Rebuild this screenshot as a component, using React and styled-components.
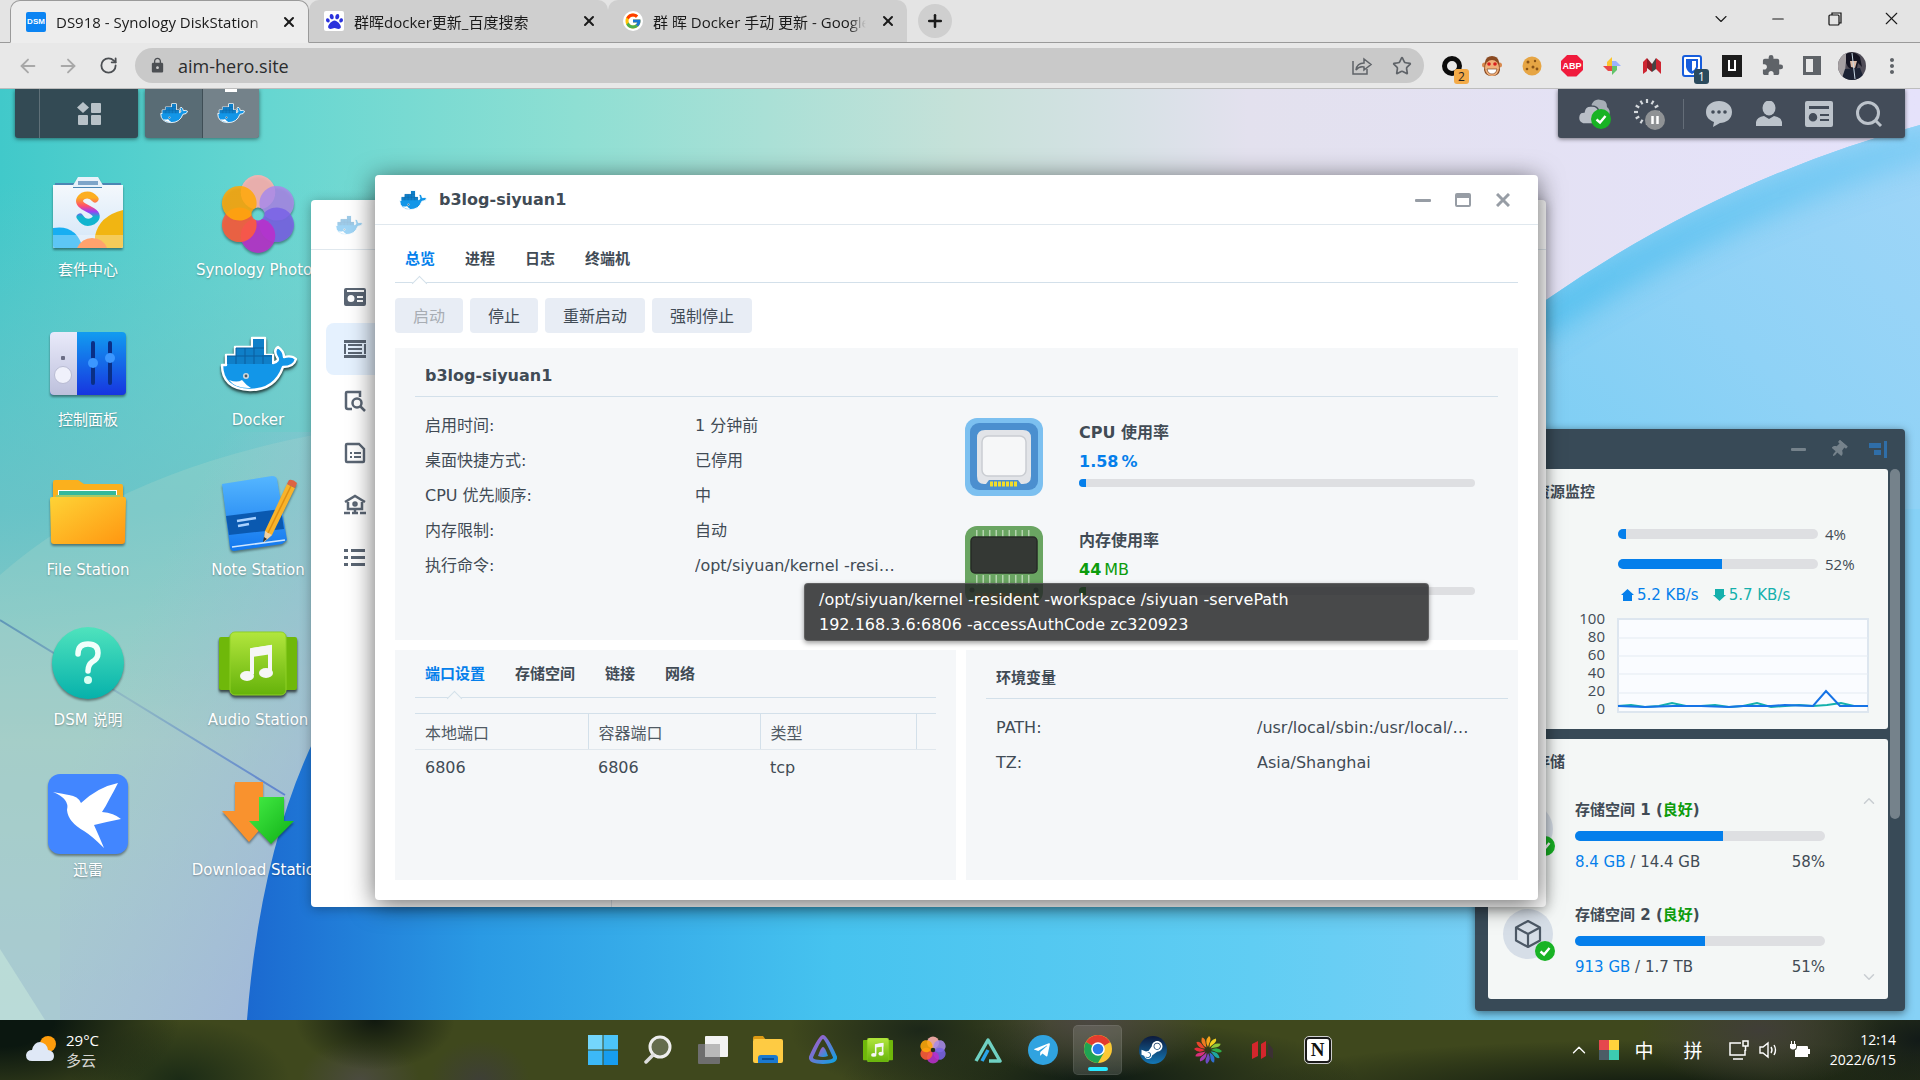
import React from 'react';
import styled, { createGlobalStyle, css } from 'styled-components';
import { FcGoogle } from 'react-icons/fc';
import { FaPaw, FaThumbtack, FaTelegramPlane, FaSteamSymbol } from 'react-icons/fa';
import { MdExtension, MdLock, MdMoreVert } from 'react-icons/md';
import { ArrowLeft, ArrowRight, ChevronDown, ChevronUp, Minus, Plus, RotateCw, Star, X } from 'lucide-react';

const ui = '"Open Sans", "Noto Sans CJK SC", sans-serif';
const dsm = '"DejaVu Sans", "Noto Sans CJK SC", sans-serif';
const ink = '#414b55';
const blue = '#057feb';
const green = '#0c9c0c';
const line = '#d3e0ea';

const Global = createGlobalStyle`
  *, *::before, *::after { box-sizing: border-box; }
  body { margin: 0; background: #333; overflow: hidden; }
  button, input { font: inherit; color: inherit; border: 0; background: none; padding: 0; margin: 0; }
  svg { display: block; flex: none; }
  dl, dd, h1, h2, h3, p, ul { margin: 0; padding: 0; }
`;

const Screen = styled.div`
  display: flex;
  flex-direction: column;
  height: 100vh;
  font-family: ${ui};
`;

/* ---------- browser ---------- */

const TabStrip = styled.header`
  display: flex;
  height: 43px;
  padding-left: 10px;
  background: #e4e4e4;
  border-bottom: 1px solid #9a9a9a;
  color: #1b1b1b;
`;
const BrowserTab = styled.div`
  display: flex;
  align-items: center;
  width: 299px;
  height: 43px;
  padding: 0 9px 0 15px;
  font-size: 15px;
  border-radius: 10px 10px 0 0;
  background: #cfcfcf;
  border-bottom: 1px solid #9a9a9a;
  ${(p) => p.$active && css`
    background: #ededed;
    border: 1px solid #9a9a9a;
    border-bottom-color: #ededed;
  `}
`;
const TabTitle = styled.span`
  flex: 1;
  margin: 0 12px 0 10px;
  overflow: hidden;
  white-space: nowrap;
  mask-image: linear-gradient(90deg, #000 92%, transparent);
`;
const TabClose = styled.button`
  display: grid;
  place-items: center;
  width: 20px;
  height: 20px;
`;
const DsmIcon = styled.span`
  display: grid;
  place-items: center;
  width: 20px;
  height: 20px;
  border-radius: 2px;
  background: #0b84f3;
  color: #fff;
  font: bold 8px/10px "Liberation Sans", sans-serif;
`;
const Favicon = styled.span`
  display: grid;
  place-items: center;
  width: 20px;
  height: 20px;
  border-radius: ${(p) => p.$round || '2px'};
  background: #fff;
  color: #2a32dc;
`;
const NewTab = styled.button`
  display: grid;
  place-items: center;
  width: 34px;
  height: 34px;
  margin: 4px 0 0 11px;
  border-radius: 50%;
  background: #cfcfcf;
`;
const WindowButtons = styled.div`
  display: flex;
  margin-left: auto;
`;
const WindowButton = styled.button`
  display: grid;
  place-items: center;
  width: 57px;
  height: 37px;
`;
const Toolbar = styled.nav`
  display: flex;
  align-items: center;
  height: 46px;
  padding: 0 8px;
  background: #e8e8e8;
  border-bottom: 1px solid #bdbdbd;
  color: #5f6368;
`;
const NavButton = styled.button`
  display: grid;
  place-items: center;
  width: 40px;
  height: 40px;
  color: ${(p) => (p.disabled ? '#a8a8a8' : '#4c4f53')};
`;
const Omnibox = styled.label`
  display: flex;
  flex: 1;
  align-items: center;
  height: 35px;
  margin: 0 8px 0 7px;
  padding: 0 2px 0 14px;
  border-radius: 18px;
  background: #c9c9c9;
  input { flex: 1; height: 34px; margin-left: 12px; font-size: 18px; color: #2a2c2e; outline: 0; }
`;
const ExtBadge = styled.span`
  position: absolute;
  right: 3px;
  bottom: 2px;
  width: 15px;
  border-radius: 3px;
  font-size: 12px;
  line-height: 15px;
  text-align: center;
  background: ${(p) => p.$bg};
  color: ${(p) => p.$fg};
`;
const ExtButton = styled.button`
  position: relative;
  display: grid;
  place-items: center;
  width: 40px;
  height: 40px;
`;
const AbpMark = styled.span`
  display: grid;
  place-items: center;
  width: 22px;
  height: 22px;
  background: #f01b3c;
  clip-path: polygon(30% 0, 70% 0, 100% 30%, 100% 70%, 70% 100%, 30% 100%, 0 70%, 0 30%);
  color: #fff;
  font: bold 9px/10px "Liberation Sans", sans-serif;
`;

/* ---------- desktop ---------- */

const Desktop = styled.main`
  position: relative;
  flex: 1;
  min-height: 0;
  overflow: hidden;
  font-family: ${dsm};
  color: ${ink};
`;
const Wallpaper = styled.svg`
  position: absolute;
  inset: 0;
  width: 100%;
  height: 100%;
`;
const DsmBar = styled.div`
  position: relative;
  display: flex;
  gap: 7px;
  height: 49px;
  padding: 0 15px;
`;
const BarGroup = styled.div`
  display: flex;
  background: ${(p) => p.$bg || '#334a54'};
  border-radius: 0 0 3px 3px;
  box-shadow: 0 1px 4px rgba(0, 0, 0, .5);
  overflow: hidden;
`;
const BarStub = styled.span`
  width: 25px;
  border-right: 1px solid #5f7078;
`;
const BarButton = styled.button`
  position: relative;
  display: grid;
  place-items: center;
  width: ${(p) => p.$w || 57}px;
  ${(p) => p.$lit && css`
    background: #74828a;
    border-left: 1px solid #3f4e56;
    &::before {
      content: '';
      position: absolute;
      top: 0;
      left: calc(50% - 6px);
      width: 12px;
      height: 3px;
      background: #fff;
    }
  `}
`;
const Tray = styled.div`
  display: flex;
  align-items: center;
  width: 347px;
  margin-left: auto;
  padding: 0 11px;
  background: #434c59;
  border-radius: 0 0 3px 3px;
  box-shadow: 0 1px 4px rgba(0, 0, 0, .5);
`;
const TraySplit = styled.span`
  width: 1px;
  height: 30px;
  margin: 0 10px 0 4px;
  background: #646d78;
`;
const Shortcuts = styled.div`
  position: relative;
  display: grid;
  grid-template-columns: repeat(2, 170px);
  grid-template-rows: repeat(5, 150px);
  grid-auto-flow: column;
  margin: 36px 0 0 3px;
`;
const Shortcut = styled.button`
  display: flex;
  flex-direction: column;
  align-items: center;
  gap: 5px;
  color: #fff;
  font-size: 15px;
  line-height: 22px;
  white-space: nowrap;
  text-shadow: 0 1px 2px rgba(0, 0, 0, .3);
  svg { overflow: visible; filter: drop-shadow(0 2px 1px rgba(0, 0, 0, .4)); }
`;

const Window = styled.section`
  position: absolute;
  left: ${(p) => p.$x}px;
  top: ${(p) => p.$y}px;
  width: ${(p) => p.$w}px;
  height: ${(p) => p.$h || 'auto'};
  display: flex;
  flex-direction: column;
  border-radius: 4px;
  background: #fff;
  box-shadow: ${(p) => (p.$front ? '0 4px 26px rgba(0, 0, 0, .6)' : '0 2px 12px rgba(0, 0, 0, .3)')};
`;
const TitleBar = styled.header`
  display: flex;
  align-items: center;
  gap: 12px;
  height: 50px;
  padding: 1px 21px 0 24px;
  border-bottom: 1px solid #e0e8ee;
  h1 { flex: 1; font-size: 16px; line-height: 24px; }
`;
const TitleButton = styled.button`
  display: grid;
  place-items: center;
  width: 28px;
  height: 28px;
`;
const BackBody = styled.div`
  display: flex;
  flex: 1;
`;
const SideNav = styled.nav`
  width: 301px;
  padding: 21px 15px;
  border-right: 1px solid #dfe6ec;
`;
const SideItem = styled.button`
  display: flex;
  align-items: center;
  width: 100%;
  height: 52px;
  padding-left: 18px;
  border-radius: 8px;
  background: ${(p) => (p.$on ? '#e5f1fe' : 'transparent')};
`;
const Body = styled.div`
  padding: 0 20px 20px;
`;
const Tabs = styled.div`
  display: flex;
  gap: 30px;
  height: ${(p) => p.$h}px;
  padding: ${(p) => p.$top || 0}px 10px 0;
  border-bottom: 1px solid ${line};
`;
const Tab = styled.button`
  position: relative;
  padding-bottom: 2px;
  font-size: 15px;
  font-weight: bold;
  color: ${(p) => (p.$on ? blue : ink)};
  ${(p) => p.$on && css`
    &::after {
      content: '';
      position: absolute;
      left: calc(50% - 6px);
      bottom: -7px;
      width: 11px;
      height: 11px;
      transform: rotate(45deg);
      background: ${p.$bg};
      border: solid ${line};
      border-width: 1px 0 0 1px;
    }
  `}
`;
const Actions = styled.div`
  display: flex;
  gap: 7px;
  margin: 15px 0;
`;
const Action = styled.button`
  height: 35px;
  padding: 0 18px 2px;
  border-radius: 4px;
  background: #e8edf5;
  font-size: 16px;
  color: ${(p) => (p.disabled ? '#a8adb4' : ink)};
`;
const Panel = styled.section`
  background: #f5f7f9;
  min-height: ${(p) => p.$h}px;
`;
const PanelTitle = styled.h2`
  height: 49px;
  margin: 0 ${(p) => p.$r || 20}px 0 20px;
  padding: 16px 10px 0;
  border-bottom: 1px solid ${line};
  font-size: ${(p) => p.$size || 16}px;
  line-height: 24px;
`;
const PanelBody = styled.div`
  display: flex;
  padding: 0 ${(p) => p.$r || 43}px 0 30px;
`;
const Facts = styled.dl`
  flex: 0 0 ${(p) => p.$w};
  display: grid;
  grid-template-columns: ${(p) => p.$cols};
  grid-auto-rows: 35px;
  align-content: start;
  padding-top: 11px;
  font-size: 16px;
  line-height: 35px;
  dd { overflow: hidden; text-overflow: ellipsis; white-space: nowrap; }
`;
const Usages = styled.div`
  flex: 1;
  display: flex;
  flex-direction: column;
  gap: 30px;
  padding-top: 21px;
`;
const Usage = styled.div`
  display: flex;
  gap: 36px;
  height: 78px;
`;
const UsageText = styled.div`
  flex: 1;
  display: flex;
  flex-direction: column;
  font-size: 16px;
  line-height: 29px;
  h3 { font-size: 16px; }
  p { display: flex; gap: 3px; color: ${(p) => p.$color}; margin-bottom: 3px; }
`;
const Meter = styled.div`
  flex: none;
  width: ${(p) => p.$w || 'auto'};
  height: ${(p) => p.$h || 10}px;
  border-radius: 5px;
  background: #dedfe2;
  overflow: hidden;
`;
const MeterFill = styled.div`
  height: 100%;
  background: ${(p) => p.$color || blue};
`;
const Lower = styled.div`
  display: grid;
  grid-template-columns: 561fr 552fr;
  gap: 10px;
  margin-top: 10px;
`;
const Inset = styled.div`
  padding: 0 20px;
`;
const Ports = styled.table`
  width: 100%;
  margin-top: 15px;
  border-collapse: collapse;
  table-layout: fixed;
  font-size: 16px;
  text-align: left;
  th, td { height: 36px; padding: 0 10px; font-weight: normal; }
  th { border-top: 1px solid ${line}; border-bottom: 1px solid #e0e7ed; border-right: 1px solid ${line}; color: #505a64; }
  th:last-child { border-right: 0; }
`;
const Tooltip = styled.div`
  position: absolute;
  left: 429px;
  top: 408px;
  width: 625px;
  padding: 3px 14px;
  border-radius: 4px;
  border: 1px solid rgba(120, 120, 120, .5);
  background: rgba(38, 39, 40, .84);
  box-shadow: 0 2px 5px rgba(0, 0, 0, .4);
  color: #fff;
  font-size: 16px;
  line-height: 25px;
`;

/* ---------- widgets ---------- */

const Widgets = styled.aside`
  position: absolute;
  right: 15px;
  bottom: 9px;
  width: 430px;
  padding: 0 5px 12px 13px;
  border-radius: 4px;
  background: #384a57;
  box-shadow: 0 2px 8px rgba(0, 0, 0, .5);
`;
const WidgetHead = styled.div`
  display: flex;
  justify-content: flex-end;
  align-items: center;
  gap: 12px;
  height: 40px;
  padding-right: 8px;
`;
const Pin = styled(FaThumbtack)`
  color: #75828b;
  transform: rotate(40deg);
`;
const WidgetBody = styled.div`
  display: flex;
  gap: 2px;
`;
const Cards = styled.div`
  flex: 1;
  display: flex;
  flex-direction: column;
  gap: 10px;
`;
const Card = styled.section`
  height: 260px;
  padding: 12px ${(p) => p.$r}px 0 15px;
  border-radius: 3px;
  background: #f4f7f6;
  font-size: 15px;
  line-height: 20px;
  h2 { margin-left: 32px; font-size: 15px; line-height: 22px; }
`;
const Scrollbar = styled.div`
  width: 10px;
  height: 350px;
  border-radius: 5px;
  background: #75828b;
`;
const Loads = styled.div`
  padding: 16px 0 0 115px;
  font-family: ${ui};
`;
const LoadRow = styled.div`
  display: flex;
  align-items: center;
  gap: 7px;
  height: 30px;
`;
const Speeds = styled.div`
  display: flex;
  gap: 14px;
  height: 30px;
  align-items: center;
  padding: 2px 0 0 118px;
`;
const Speed = styled.span`
  display: flex;
  align-items: center;
  gap: 3px;
  color: ${(p) => p.$color};
`;
const ChartRow = styled.div`
  display: flex;
  justify-content: flex-end;
  align-items: flex-end;
  gap: 12px;
  height: 104px;
`;
const Scale = styled.div`
  display: flex;
  flex-direction: column;
  align-self: flex-start;
  text-align: right;
  font-family: ${ui};
  font-size: 15px;
  line-height: 18px;
  span { height: 18px; }
`;
const StorageList = styled.div`
  display: flex;
  margin-top: 19px;
`;
const Volumes = styled.div`
  flex: 1;
  display: flex;
  flex-direction: column;
  padding-top: 7px;
`;
const Volume = styled.div`
  display: flex;
  gap: 22px;
  height: 105px;
  > svg { margin-top: 5px; }
`;
const VolumeText = styled.div`
  width: 250px;
  display: flex;
  flex-direction: column;
  line-height: 22px;
  h3 { font-size: 15px; margin-bottom: 10px; }
  h3 em { font-style: normal; color: ${green}; }
  p { display: flex; margin-top: 10px; }
  p b { font-weight: normal; color: ${blue}; white-space: pre; }
  p span { flex: 1; }
`;
const Arrows = styled.div`
  display: flex;
  flex-direction: column;
  justify-content: space-between;
  height: 194px;
  color: #c9ced2;
`;

/* ---------- taskbar ---------- */

const Taskbar = styled.footer`
  display: grid;
  grid-template-columns: 1fr auto 1fr;
  height: 60px;
  color: #fff;
  background:
    radial-gradient(80px 50px at 375px 0, #10180f, transparent),
    radial-gradient(180px 90px at 0 0, #0b1710 30%, transparent),
    radial-gradient(110px 60px at 180px 60px, #1b2b16, transparent),
    radial-gradient(60px 40px at 360px 60px, #4b4b3f, transparent),
    radial-gradient(50px 40px at 480px 60px, #3e3f36, transparent),
    radial-gradient(130px 60px at 920px 10px, #1c2719, transparent),
    radial-gradient(120px 60px at 1090px 0, #4b4742, transparent),
    radial-gradient(260px 60px at 1100px 60px, #0e1a14, transparent),
    radial-gradient(120px 60px at 1760px 10px, #403e38, transparent),
    radial-gradient(420px 50px at 1650px 70px, #0d170f, transparent),
    radial-gradient(160px 90px at 1920px 20px, #121a18, transparent),
    #3f481d;
`;
const Weather = styled.div`
  display: flex;
  align-items: center;
  gap: 10px;
  padding-left: 26px;
  font-size: 15px;
  line-height: 20px;
  small { display: block; font-size: 15px; color: #d5d5d2; }
`;
const Dock = styled.div`
  display: flex;
`;
const DockButton = styled.button`
  display: flex;
  flex-direction: column;
  align-items: center;
  justify-content: center;
  width: 49px;
  height: 50px;
  margin: 5px 3px 0;
  border-radius: 5px;
  ${(p) => p.$active && css`
    padding-top: 5px;
    background: rgba(255, 255, 255, .13);
    box-shadow: inset 0 0 0 1px rgba(255, 255, 255, .08);
    &::after { content: ''; width: 20px; height: 4px; margin-top: 4px; border-radius: 2px; background: #29e7ff; }
  `}
`;
const SysTray = styled.div`
  display: flex;
  justify-content: flex-end;
  align-items: center;
  padding-right: 24px;
`;
const TrayItem = styled.button`
  display: grid;
  place-items: center;
  width: ${(p) => p.$w}px;
  height: 40px;
  font-size: 19px;
`;
const Clock = styled.div`
  width: 79px;
  text-align: right;
  font-size: 14px;
  line-height: 20px;
`;
const NotionMark = styled.span`
  display: grid;
  place-items: center;
  width: 26px;
  height: 26px;
  border: 2px solid #1a1a1a;
  outline: 1px solid #cfcfcf;
  border-radius: 4px;
  background: #fff;
  color: #111;
  font: bold 19px/20px "Liberation Serif", serif;
`;

/* ---------- drawings ---------- */

const Whale = ({ w = 77, fade }) => (
  <svg width={w} height={(w * 56) / 77} viewBox="0 0 77 56" opacity={fade ? 0.4 : 1}>
    <path d="M2 29H6V19H15V11H32V2H45V19H53V27Q60 25 57 21 53 14 58 11 64 15 64 21 72 19 76 23 74 31 63 31 55 54 30 54 2 53 2 29Z" fill="#1296e8" stroke="#fff" strokeWidth="2.4" strokeLinejoin="round" />
    <path d="M7 20H16V12H33V3H44V19H52V28H7Z" fill="#0f7fc8" />
    <path d="M7 20H52M16 12H44M16 12V28M25 12V28M34 12V28M43 19V28" stroke="#0a5f9e" strokeWidth="1" />
    <path d="M9 44Q17 47 22 44 26 49 31 52 16 53 9 44Z" fill="#fff" />
    <circle cx="26" cy="40" r="3" fill="#cfd8dd" /><circle cx="26" cy="40" r="1.4" fill="#4f5a60" />
  </svg>
);

const Flower = ({ s = 74, id }) => {
  const petals = [['#ffb3b0', 0], ['#a98be8', 60], ['#7a63e6', 120], ['#b92fcb', 180], ['#ff5b3a', 240], ['#ffa90a', 300]];
  return (
    <svg width={s} height={s} viewBox="0 0 74 74">
      <defs><mask id={id}><rect width="74" height="74" fill="#fff" /><circle cx="37" cy="37" r="6" fill="#000" /></mask></defs>
      <g mask={`url(#${id})`}>
        {petals.map(([c, a]) => <circle key={a} cx="37" cy="17" r="16" fill={c} opacity=".88" transform={`rotate(${a} 37 37)`} />)}
      </g>
    </svg>
  );
};

const Music = ({ w = 78 }) => (
  <svg width={w} height={(w * 64) / 78} viewBox="0 0 78 64">
    <rect y="5" width="20" height="53" rx="2" fill="#6fb80a" /><rect x="58" y="5" width="20" height="53" rx="2" fill="#6fb80a" />
    <rect x="11" width="56" height="63" rx="5" fill="url(#lime)" stroke="#8fd127" />
    <path d="M33 42V18L51 15V39" fill="none" stroke="#f6f6f6" strokeWidth="4" /><path d="M33 16 53 13V22L33 25Z" fill="#f6f6f6" />
    <ellipse cx="28" cy="44" rx="7" ry="5" fill="#f6f6f6" /><ellipse cx="47" cy="41" rx="7" ry="5" fill="#f6f6f6" />
  </svg>
);

const Store = () => (
  <svg width="72" height="80" viewBox="0 0 72 80">
    <path d="M3 9H69V16H3Z" fill="#4b86b4" /><path d="M20 13 26 3H46L52 13Z" fill="#e9f2fa" /><path d="M26 7H46V11H26Z" fill="#7ea5c9" />
    <path d="M1 11H21V14H50V11H71V72Q71 74 69 74H3Q1 74 1 72Z" fill="url(#bag)" />
    <path d="M43 62Q47 42 71 36V72Q71 74 69 74H43Z" fill="#f1b512" /><path d="M1 54Q24 50 31 74H3Q1 74 1 72Z" fill="#17aef2" /><path d="M25 74Q30 64 40 64 51 64 55 74Z" fill="#ff7a2e" />
    <path d="M1 61H71V74H1Z" fill="#fff" opacity=".3" />
    <path d="M43 25Q38 19 31 22 24 27 31 32L40 37Q48 42 41 47 33 51 28 43" fill="none" stroke="url(#sgrad)" strokeWidth="7" strokeLinecap="round" />
  </svg>
);

const ControlPanel = () => (
  <svg width="76" height="80" viewBox="0 0 76 80">
    <rect y="8" width="76" height="63" rx="4" fill="url(#cp)" /><path d="M4 8H27V71H4Q0 71 0 67V12Q0 8 4 8Z" fill="url(#cpl)" />
    <rect x="11" y="32" width="4" height="4" rx="1" fill="#6b6d85" /><circle cx="13" cy="51" r="8.5" fill="#f0f1fb" stroke="#b9bcd3" />
    <path d="M43 19V59M60 19V59" stroke="#0a2f86" strokeWidth="4" strokeLinecap="round" /><circle cx="43" cy="39" r="5" fill="#3c97ff" /><circle cx="60" cy="34" r="5" fill="#3c97ff" />
  </svg>
);

const Folder = () => (
  <svg width="76" height="80" viewBox="0 0 76 80">
    <path d="M3 8Q3 6 5 6H28L34 10H71Q73 10 73 12V34H3Z" fill="#fbb01d" /><path d="M8 16H67V30H8Z" fill="#fff" /><path d="M9 17H66V22H9Z" fill="#33b89b" /><path d="M6 21H70V30H6Z" fill="#a3c96a" />
    <path d="M0 25Q0 23 2 23H74Q76 23 76 25L75 67Q75 70 72 70H4Q1 70 1 67Z" fill="url(#fold)" />
  </svg>
);

const Note = () => (
  <svg width="76" height="80" viewBox="0 0 76 80">
    <path d="M2 10 52 2Q56 2 57 5L67 66 62 70 14 77Q11 77 10 74Z" fill="url(#note)" /><path d="M6 42 61 35 64 55 9 61Z" fill="#0a59b0" /><path d="M12 73 65 66" stroke="#cfe6ff" strokeWidth="1.5" />
    <path d="M17 47 36 44M18 52 29 50" stroke="#a9d2ff" strokeWidth="2.5" />
    <path d="M67 10 75 14 52 61 44 68 45 57Z" fill="#f9b32a" /><path d="M67 10 69 6Q73 5 77 9L75 14Z" fill="#dd6344" /><path d="M45 57 52 61 44 68Z" fill="#edd0a6" /><path d="M44 63 47 65 43 68Z" fill="#333" /><path d="M71 12 48 59" stroke="#e08f12" strokeWidth="1.5" />
  </svg>
);

const Help = () => (
  <svg width="72" height="80" viewBox="0 0 72 80">
    <circle cx="36" cy="39" r="36" fill="url(#help)" /><path d="M26 30Q26 20 36 20 46 20 46 29 46 35 40 38 36 41 36 47" fill="none" stroke="#f1fffb" strokeWidth="5.500" strokeLinecap="round" /><circle cx="36" cy="56" r="4" fill="#d8fff3" />
  </svg>
);

const Bird = () => (
  <svg width="80" height="80" viewBox="0 0 80 80">
    <rect width="80" height="80" rx="12" fill="#4286ff" />
    <path d="M5 18Q16 20 21 21 30 22 33 29 50 13 70 9 66 17 62 24 58 32 54 38 66 39 73 45 58 48 46 51 51 62 56 74 44 62 36 57 20 48 19 36 22 25 5 18Z" fill="#fff" />
  </svg>
);

const Download = () => (
  <svg width="72" height="80" viewBox="0 0 72 80">
    <path d="M13 8H41V37H54L27 68 0 37H13Z" fill="#f9922e" /><path d="M37 23H62V47H72L49 70 27 47H37Z" fill="url(#dl)" />
  </svg>
);

const Cpu = () => (
  <svg width="78" height="78" viewBox="0 0 78 78">
    <rect width="78" height="78" rx="12" fill="#7cc0f0" /><rect x="5" y="5" width="68" height="67" rx="9" fill="#4b8fcf" />
    <path d="M20 12H58Q66 12 66 20V58Q66 66 58 66H56L53 62H24L21 66H19Q12 66 12 58V20Q12 12 20 12Z" fill="#e2e4e8" />
    <rect x="17" y="18" width="44" height="40" rx="6" fill="#f6f7f8" stroke="#cacdd2" strokeWidth="1.5" />
    <path d="M25 66H53" stroke="#f2dd2a" strokeWidth="5" strokeDasharray="3 1" />
  </svg>
);

const Ram = () => (
  <svg width="78" height="78" viewBox="0 0 78 78">
    <rect width="78" height="78" rx="12" fill="#6aa562" /><path d="M11 9H67M11 54H67" stroke="#b6d5b0" strokeWidth="10" strokeDasharray="1.5 5" />
    <rect x="6" y="11" width="66" height="36" rx="4" fill="#343834" stroke="#262a26" strokeWidth="1.5" />
    <path d="M11 72H67" stroke="#e0a32a" strokeWidth="9" strokeDasharray="4 2.5" /><circle cx="7" cy="64" r="2.5" fill="#2b5a2b" /><circle cx="71" cy="64" r="2.5" fill="#2b5a2b" />
  </svg>
);

const Check = ({ x, y }) => (
  <g transform={`translate(${x} ${y})`}><circle cx="10" cy="10" r="10" fill="#18b324" /><path d="M5.5 10.5 9 13.5 14.5 7" fill="none" stroke="#fff" strokeWidth="2.4" /></g>
);

const VolumeIcon = () => (
  <svg width="50" height="50" viewBox="0 0 50 50" overflow="visible">
    <circle cx="25" cy="25" r="25" fill="#d6dee7" />
    <path d="M25 12 37 18.500V31.500L25 38 13 31.500V18.500ZM13 18.500 25 25 37 18.500M25 25V38" fill="none" stroke="#4d5966" strokeWidth="2.2" strokeLinejoin="round" />
    <Check x={32} y={32} />
  </svg>
);

const sideIcons = [
  <path d="M2 2H20Q22 2 22 4V18Q22 20 20 20H2Q0 20 0 18V4Q0 2 2 2ZM3 4V6H20V4ZM13 10V12H19V10ZM13 14V16H19V14ZM7 9A3.500 3.500 0 1 0 7 16 3.500 3.500 0 1 0 7 9Z" fillRule="evenodd" />,
  <path d="M0 2H22V5H0ZM0 17H22V20H0ZM0 6H2V16H0ZM20 6H22V16H20ZM4 6H18V8H4ZM4 10H18V12H4ZM4 14H18V16H4Z" />,
  <g fill="none" stroke="#5a6573" strokeWidth="2.500"><path d="M16 7V2H3Q2 2 2 3V17Q2 19 4 19H8" /><circle cx="13" cy="13" r="4.500" /><path d="M16 16 21 21" /></g>,
  <g fill="none" stroke="#5a6573" strokeWidth="2"><path d="M2 3Q2 2 3 2H15L20 7V19Q20 20 19 20H3Q2 20 2 19Z" strokeWidth="2.400" /><path d="M6 11H8M10 11H17M6 15H8M10 15H17" /></g>,
  <g fill="none" stroke="#5a6573" strokeWidth="2.500"><path d="M1 8 11 2 21 8M4 8V15H18V8M11 15V19M0 19H6M8 19H14M16 19H22" /><circle cx="11" cy="10" r="1.500" /></g>,
  <path d="M0 3H4V6H0ZM7 3H21V6H7ZM0 10H4V13H0ZM7 10H21V13H7ZM0 17H4V20H0ZM7 17H21V20H7Z" />,
];

const WallpaperArt = () => (
  <Wallpaper viewBox="0 0 1920 931" preserveAspectRatio="none" aria-hidden="true">
    <defs>
      <linearGradient id="sky"><stop offset="0" stopColor="#41c9ca" /><stop offset=".14" stopColor="#66d6d1" /><stop offset=".3" stopColor="#8edfd3" /><stop offset=".5" stopColor="#c6e1d9" /><stop offset=".65" stopColor="#e3e1ee" /><stop offset="1" stopColor="#e5e2fb" /></linearGradient>
      <linearGradient id="leftFade" x1="0" y1="0" x2="0" y2="1"><stop offset=".1" stopColor="#7cc3c8" stopOpacity="0" /><stop offset=".45" stopColor="#74c1c6" stopOpacity=".75" /><stop offset=".7" stopColor="#9fccc6" /><stop offset="1" stopColor="#a9c3dc" /></linearGradient>
      <linearGradient id="haze" x1="0" y1="0" x2="1" y2="1"><stop offset=".3" stopColor="#a5bcd4" stopOpacity="0" /><stop offset="1" stopColor="#9fb4dc" /></linearGradient>
      <linearGradient id="edge"><stop offset="0" stopColor="#5f97b8" /><stop offset=".45" stopColor="#8fb9c4" /><stop offset="1" stopColor="#5f83cf" /></linearGradient>
      <linearGradient id="lower"><stop offset="0" stopColor="#1b69d0" /><stop offset=".14" stopColor="#2a9ae4" /><stop offset=".35" stopColor="#46c3ef" /><stop offset=".6" stopColor="#60cdf3" /><stop offset=".75" stopColor="#79d0f6" /><stop offset="1" stopColor="#86d1f6" /></linearGradient>
      <linearGradient id="band" x1="0" y1="1" x2="1" y2="0"><stop offset="0" stopColor="#78cdf3" /><stop offset=".5" stopColor="#8fd2f6" /><stop offset="1" stopColor="#a0d6f8" /></linearGradient>
      <linearGradient id="glow" x1="0" y1="0" x2="1" y2="0"><stop offset="0" stopColor="#46bbec" /><stop offset="1" stopColor="#74c9f4" /></linearGradient>
      <filter id="soft" x="-20%" y="-20%" width="140%" height="140%"><feGaussianBlur stdDeviation="14" /></filter>
      <clipPath id="bandClip"><path d="M1920 36Q1720 90 1546 211L1500 420H1920Z" /></clipPath>
      <linearGradient id="bag" x1="0" y1="0" x2="0" y2="1"><stop offset="0" stopColor="#f4f8fc" /><stop offset="1" stopColor="#d3e6f8" /></linearGradient>
      <linearGradient id="sgrad" x1="0" y1="0" x2="0" y2="1"><stop offset=".1" stopColor="#fcae20" /><stop offset=".4" stopColor="#ff4d6d" /><stop offset=".6" stopColor="#a03cf5" /><stop offset=".8" stopColor="#11b5cf" /></linearGradient>
      <linearGradient id="cp" x1="0" y1="0" x2="0" y2="1"><stop offset="0" stopColor="#129cf0" /><stop offset="1" stopColor="#1735e0" /></linearGradient>
      <linearGradient id="cpl" x1="0" y1="0" x2="0" y2="1"><stop offset="0" stopColor="#e9eafa" /><stop offset="1" stopColor="#bdc0dc" /></linearGradient>
      <linearGradient id="fold" x1="0" y1="0" x2="1" y2="1"><stop offset="0" stopColor="#fed336" /><stop offset="1" stopColor="#ff9610" /></linearGradient>
      <linearGradient id="note" x1="0" y1="0" x2="0" y2="1"><stop offset="0" stopColor="#55b6ff" /><stop offset="1" stopColor="#1277ee" /></linearGradient>
      <linearGradient id="help" x1="0" y1="0" x2="0" y2="1"><stop offset="0" stopColor="#4fe3bd" /><stop offset="1" stopColor="#06b1ab" /></linearGradient>
      <linearGradient id="lime" x1="0" y1="0" x2="0" y2="1"><stop offset="0" stopColor="#b2e63d" /><stop offset="1" stopColor="#65b20a" /></linearGradient>
      <linearGradient id="dl" x1="0" y1="0" x2="1" y2="1"><stop offset="0" stopColor="#45ee45" /><stop offset="1" stopColor="#0fae16" /></linearGradient>
    </defs>
    <rect width="1920" height="931" fill="url(#sky)" />
    <rect width="700" height="931" fill="url(#leftFade)" />
    <path d="M0 486Q120 380 330 343V760L285 706 0 531Z" fill="#b7dccb" opacity=".25" />
    <path d="M0 531 285 706 247 931H0Z" fill="#a9cfcb" opacity=".55" />
    <path d="M60 343H330V931H60Z" fill="url(#haze)" />
    <path d="M0 860 45 931H0Z" fill="#c2e3da" opacity=".7" />
    <path d="M0 531 285 706" stroke="url(#edge)" strokeWidth="2" />
    <path d="M330 620Q262 740 247 931H1920V36Q1720 90 1546 211V620Z" fill="url(#lower)" />
    <path d="M1920 36Q1720 90 1546 211L1500 420H1920Z" fill="url(#band)" />
    <g clipPath="url(#bandClip)">
      <path d="M1520 245Q1720 110 1940 50" fill="none" stroke="url(#glow)" strokeWidth="34" opacity=".8" filter="url(#soft)" />
    </g>
  </Wallpaper>
);

const Chart = () => (
  <svg width="252" height="95" viewBox="0 0 252 95">
    <rect x="1" y="1" width="250" height="93" fill="#fafcff" stroke="#dde6ef" strokeWidth="2" />
    <path d="M1 20H251M1 38H251M1 56H251M1 75H251" stroke="#e4ebf2" />
    <polyline points="1,88 14,87 28,89 42,88 55,85 69,88 84,88 98,87 112,89 126,88 140,85 154,89 168,88 182,87 196,88 210,87 224,85 237,88 251,88" fill="none" stroke="#14b0ac" strokeWidth="2" />
    <polyline points="1,88 28,89 56,88 84,88 112,89 126,88 154,88 168,87 196,88 209,73 223,88 251,88" fill="none" stroke="#1673e6" strokeWidth="2" />
  </svg>
);

const Pinwheel = () => {
  const colors = ['#f7a51c', '#f2d21f', '#8fc93a', '#2fae4a', '#1fa6a0', '#2f6fd0', '#6a4bc3', '#a23bb5', '#d92f7b', '#e52e3c', '#e8452c', '#ef7a20'];
  return (
    <svg width="28" height="30" viewBox="-14 -15 28 30">
      {colors.map((c, i) => <path key={c} d="M0-3Q-4-9 1-14 4-12 1-6Z" fill={c} transform={`rotate(${i * 30})`} />)}
    </svg>
  );
};

const shortcuts = [
  ['套件中心', <Store />], ['控制面板', <ControlPanel />], ['File Station', <Folder />], ['DSM 说明', <Help />], ['迅雷', <Bird />],
  ['Synology Photos', <Flower s={80} id="petalsBig" />],
  ['Docker', <svg width="77" height="80" viewBox="0 0 77 80"><g transform="translate(0 12)"><Whale /></g></svg>],
  ['Note Station', <Note />],
  ['Audio Station', <svg width="78" height="80" viewBox="0 0 78 80"><g transform="translate(0 8)"><Music /></g></svg>],
  ['Download Station', <Download />],
];

const extensions = [
  ['容器', <svg width="24" height="24"><circle cx="12" cy="12" r="7.500" fill="none" stroke="#0c0c0c" strokeWidth="5" /></svg>, ['2', '#f3ab48', '#222']],
  ['篡改猴', <svg width="20" height="22" viewBox="0 0 20 22"><circle cx="2.500" cy="10" r="2.500" fill="#d88a4f" /><circle cx="17.500" cy="10" r="2.500" fill="#d88a4f" /><path d="M3 7Q4 1 10 1 16 1 17 7L18 15Q17 21 10 21 3 21 2 15Z" fill="#8a4a22" /><ellipse cx="10" cy="13" rx="7" ry="8" fill="#f0b07a" /><circle cx="7" cy="9" r="1.800" fill="#d81f1f" /><circle cx="13" cy="9" r="1.800" fill="#d81f1f" /><path d="M5 14H15Q14 19 10 19 6 19 5 14Z" fill="#fff" stroke="#6a3413" strokeWidth=".6" /></svg>],
  ['Cookie', <svg width="20" height="20" viewBox="0 0 20 20"><circle cx="10" cy="10" r="9.500" fill="#e6a544" /><g fill="#8a5418"><circle cx="6" cy="6" r="1.500" /><circle cx="13" cy="5" r="1.200" /><circle cx="11" cy="11" r="1.500" /><circle cx="5" cy="13" r="1.300" /><circle cx="15" cy="13" r="1.400" /></g></svg>],
  ['ABP', <AbpMark>ABP</AbpMark>],
  ['相册', <svg width="20" height="20" viewBox="0 0 20 20"><path d="M10 1V10H5V6Z" fill="#fbc52d" /><path d="M10 10V5H14L19 10Z" fill="#9ab1ff" /><path d="M10 10H15V14L10 19Z" fill="#63c36a" /><path d="M10 10H1L6 15H10Z" fill="#e94747" /></svg>],
  ['M', <svg width="18" height="18" viewBox="0 0 18 18"><path d="M0 5 4 1V14L0 17Z" fill="#ce2531" /><path d="M4 1 9 7V15L4 11Z" fill="#8d1c26" /><path d="M9 7 13 1V12L9 15Z" fill="#444" /><path d="M13 1 18 5V17L13 12Z" fill="#ce2531" /></svg>],
  ['Bitwarden', <svg width="20" height="22" viewBox="0 0 20 22"><rect x="1" y="1" width="18" height="20" rx="2" fill="#fff" stroke="#175ddc" strokeWidth="2" /><path d="M4 4H16V12Q15 17 10 19 5 17 4 12Z" fill="#175ddc" /><path d="M10 6H14V12Q13 15 10 16Z" fill="#fff" /></svg>, ['1', '#2b4a5c', '#fff']],
  ['LI', <svg width="20" height="22" viewBox="0 0 20 22"><rect width="20" height="22" fill="#1c1c1c" /><path d="M7 5V15H13V5" fill="none" stroke="#fff" strokeWidth="2" /></svg>],
  ['扩展程序', <MdExtension size={23} />],
  ['侧边栏', <svg width="18" height="19"><rect x="1.500" y="1.500" width="15" height="16" fill="none" stroke="#5f6368" strokeWidth="3" /><path d="M10 2H16V17H10Z" fill="#5f6368" /></svg>],
  ['用户', <svg width="28" height="30" viewBox="0 0 28 30"><defs><clipPath id="avatar"><circle cx="14" cy="15" r="14" /></clipPath></defs><g clipPath="url(#avatar)"><rect width="28" height="30" fill="#4f4c57" /><path d="M0 0H9L6 30H0Z" fill="#a5a0a2" /><path d="M8 3Q16-1 22 6L24 16 20 12 19 17Q14 20 10 16L8 12Z" fill="#141421" /><path d="M12 10H19L17 17 13 16Z" fill="#dcbba6" /><path d="M7 18 22 17 27 30H3Z" fill="#1c2334" /><path d="M14 2 17 28" stroke="#c9d9e5" /></g></svg>],
  ['菜单', <MdMoreVert size={24} />],
];

const dock = [
  ['开始', <svg width="30" height="30"><g fill="#3cb9f7"><rect width="14.500" height="14.500" fill="#74d6fb" /><rect x="15.500" width="14.500" height="14.500" fill="#4cc4fa" /><rect y="15.500" width="14.500" height="14.500" /><rect x="15.500" y="15.500" width="14.500" height="14.500" fill="#179df0" /></g></svg>],
  ['搜索', <svg width="28" height="30"><circle cx="16" cy="12" r="10" fill="#646c4e" stroke="#eee" strokeWidth="3" /><path d="M9 20 2 27" stroke="#ddd" strokeWidth="3.500" strokeLinecap="round" /></svg>],
  ['任务视图', <svg width="30" height="28"><rect x="7" y="0" width="23" height="21" rx="1" fill="#f3f3f3" /><rect y="8" width="22" height="20" rx="1" fill="#6e6e6e" /><path d="M7 8H22V21H7Z" fill="#b9b9b9" /></svg>],
  ['文件资源管理器', <svg width="30" height="28"><path d="M0 2Q0 0 2 0H10L13 4H0Z" fill="#dc9a14" /><rect y="3" width="30" height="24" rx="2" fill="#fecb43" /><path d="M5 27V22Q5 19 8 19H22Q25 19 25 22V27Z" fill="#1b79cf" /><path d="M9 23H21" stroke="#0b4f95" strokeWidth="2" /></svg>],
  ['Jellyfin', <svg width="30" height="30" viewBox="0 0 30 30"><defs><linearGradient id="jf" x1="0" y1="0" x2="1" y2="1"><stop offset="0" stopColor="#b256c8" /><stop offset="1" stopColor="#12a0e0" /></linearGradient></defs><path d="M15 2Q18 2 27 22 28 27 15 27 2 27 3 22 12 2 15 2Z" fill="none" stroke="url(#jf)" strokeWidth="4" /><path d="M15 12Q17 12 20 21 15 23 10 21 13 12 15 12Z" fill="url(#jf)" /></svg>],
  ['Audio Station', <Music w={30} />],
  ['Photos', <Flower s={28} id="petalsSmall" />],
  ['AList', <svg width="28" height="26" viewBox="0 0 28 26"><path d="M2 24 14 3 26 24H15" fill="none" stroke="#6fd1c3" strokeWidth="3.500" strokeLinejoin="round" /><path d="M8 24 14 13" stroke="#2aa4ea" strokeWidth="3.500" /></svg>],
  ['Telegram', <svg width="30" height="30" viewBox="0 0 30 30"><circle cx="15" cy="15" r="15" fill="#30a3e0" /><g color="#fff"><FaTelegramPlane x={5} y={6} size={18} /></g></svg>],
  ['Chrome', <svg width="28" height="28" viewBox="0 0 28 28"><circle cx="14" cy="14" r="14" fill="#fcc934" /><path d="M14 14 1.900 7A14 14 0 0 1 26.100 7Z" fill="#e33b2e" /><path d="M14 7H26.100L14 14Z" fill="#e33b2e" /><path d="M14 14 1.900 7A14 14 0 0 0 14 28L20 17.500Z" fill="#1fa353" /><circle cx="14" cy="14" r="6.800" fill="#fff" /><circle cx="14" cy="14" r="5.300" fill="#2a7bea" /></svg>, true],
  ['Steam', <svg width="28" height="28" viewBox="0 0 28 28"><defs><linearGradient id="st" x1="0" y1="0" x2="0" y2="1"><stop offset="0" stopColor="#0d1a3c" /><stop offset="1" stopColor="#1478b6" /></linearGradient></defs><circle cx="14" cy="14" r="14" fill="url(#st)" /><g color="#fff"><FaSteamSymbol x={1} y={2} size={24} /></g></svg>],
  ['Pinwheel', <Pinwheel />],
  ['MacType', <svg width="22" height="18" viewBox="0 0 22 18"><path d="M0 3 6 0V15L0 18ZM9 3 14 0V15L9 18Z" fill="#d3262c" /><path d="M16 2 21 8V18L16 14Z" fill="#3c3034" /></svg>],
  ['Notion', <NotionMark>N</NotionMark>],
];

const volumes = [
  { n: 1, used: '8.4 GB', total: '14.4 GB', pct: 58, fill: 59 },
  { n: 2, used: '913 GB', total: '1.7 TB', pct: 51, fill: 52 },
];

const RightTray = () => (
  <Tray>
    <BarButton $w={52} aria-label="云同步"><svg width="36" height="34" viewBox="0 0 36 34" fill="#b9bfc7"><path d="M14 9Q17 1 24 3 30 3 30 10 34 13 32 19H18Z" opacity=".85" /><path d="M6 27Q0 25 2 18 3 15 7 15 8 8 15 9 21 9 22 15 28 16 28 22V27Z" stroke="#434c59" strokeWidth="1.500" /><Check x={14} y={12} /></svg></BarButton>
    <BarButton $w={58} aria-label="后台任务"><svg width="36" height="34" viewBox="0 0 36 34">{[...Array(12)].map((_, i) => <path key={i} d="M15 2V6" stroke="#d5d9dd" strokeWidth="2.200" transform={`rotate(${i * 30} 15 15)`} />)}<circle cx="23" cy="23" r="10" fill="#8f9295" /><path d="M20.500 19V27M25.500 19V27" stroke="#fff" strokeWidth="2.500" /></svg></BarButton>
    <TraySplit />
    <BarButton $w={50} aria-label="通知"><svg width="26" height="26" fill="#bcc3cb"><path d="M13 0C20 0 26 4 26 11 26 18 20 22 14 22L7 26 8 21C3 19 0 16 0 11 0 4 6 0 13 0Z" /><g fill="#434c59"><circle cx="7" cy="11" r="1.800" /><circle cx="13" cy="11" r="1.800" /><circle cx="19" cy="11" r="1.800" /></g></svg></BarButton>
    <BarButton $w={50} aria-label="选项"><svg width="26" height="26" fill="#bcc3cb"><ellipse cx="13" cy="7" rx="6.500" ry="7.500" /><path d="M0 25V21Q1 16 8 15L13 18 18 15Q25 16 26 21V25Z" /></svg></BarButton>
    <BarButton $w={50} aria-label="小工具"><svg width="28" height="26" fill="#bcc3cb"><path d="M2 0H26Q28 0 28 2V24Q28 26 26 26H2Q0 26 0 24V2Q0 0 2 0ZM4 5V8H24V5ZM15 13V15H24V13ZM15 18V20H24V18ZM8 12A4 4 0 1 0 8 20.500 4 4 0 1 0 8 12Z" fillRule="evenodd" /></svg></BarButton>
    <BarButton $w={50} aria-label="搜索"><svg width="28" height="28" fill="none" stroke="#bcc3cb" strokeWidth="3"><circle cx="13" cy="13" r="10.500" /><path d="M20 20 26 26" /></svg></BarButton>
  </Tray>
);

export default function App() {
  return (
    <Screen>
      <Global />
      <TabStrip>
        <BrowserTab $active><DsmIcon>DSM</DsmIcon><TabTitle>DS918 - Synology DiskStation</TabTitle><TabClose aria-label="关闭标签页"><X size={16} strokeWidth={3} /></TabClose></BrowserTab>
        <BrowserTab><Favicon><FaPaw size={17} /></Favicon><TabTitle>群晖docker更新_百度搜索</TabTitle><TabClose aria-label="关闭标签页"><X size={16} strokeWidth={3} /></TabClose></BrowserTab>
        <BrowserTab><Favicon $round="50%"><FcGoogle size={18} /></Favicon><TabTitle>群 晖 Docker 手动 更新 - Google 搜索</TabTitle><TabClose aria-label="关闭标签页"><X size={16} strokeWidth={3} /></TabClose></BrowserTab>
        <NewTab aria-label="新标签页"><Plus size={20} strokeWidth={3} /></NewTab>
        <WindowButtons>
          <WindowButton aria-label="标签列表"><ChevronDown size={20} strokeWidth={1.3} /></WindowButton>
          <WindowButton aria-label="最小化"><Minus size={18} strokeWidth={1.5} /></WindowButton>
          <WindowButton aria-label="还原"><svg width="14" height="14" fill="none" stroke="#111" strokeWidth="1.2"><rect x="1" y="3" width="10" height="10" rx="1" /><path d="M4 3V1H13V11H11" /></svg></WindowButton>
          <WindowButton aria-label="关闭"><X size={21} strokeWidth={1.3} /></WindowButton>
        </WindowButtons>
      </TabStrip>
      <Toolbar>
        <NavButton disabled aria-label="后退"><ArrowLeft size={22} /></NavButton>
        <NavButton disabled aria-label="前进"><ArrowRight size={22} /></NavButton>
        <NavButton aria-label="刷新"><RotateCw size={19} strokeWidth={2.3} /></NavButton>
        <Omnibox>
          <MdLock size={17} color="#4c4f53" />
          <input aria-label="地址" defaultValue="aim-hero.site" />
          <ExtButton aria-label="分享"><svg width="22" height="20" fill="none" stroke="#5f6368" strokeWidth="1.5"><path d="M2 5V18H16V13" /><path d="M5 14Q6 7 13 7V3L20 8.500 13 14V11Q8 10 5 14Z" /></svg></ExtButton>
          <ExtButton aria-label="收藏"><Star size={20} strokeWidth={2} /></ExtButton>
        </Omnibox>
        {extensions.map(([name, icon, badge]) => (
          <ExtButton key={name} aria-label={name}>{icon}{badge && <ExtBadge $bg={badge[1]} $fg={badge[2]}>{badge[0]}</ExtBadge>}</ExtButton>
        ))}
      </Toolbar>

      <Desktop>
        <WallpaperArt />
        <DsmBar>
          <BarGroup><BarStub /><BarButton $w={98} aria-label="主菜单"><svg width="24" height="24" fill="#b8c2c8"><path d="M6 0 12 5.500 6 11 0 5.500Z" /><rect x="14" y="1" width="10" height="10" rx="1" /><rect x="1" y="13" width="10" height="10" rx="1" /><rect x="14" y="13" width="10" height="10" rx="1" /></svg></BarButton></BarGroup>
          <BarGroup $bg="#596c75"><BarButton aria-label="Docker"><Whale w={28} /></BarButton><BarButton $lit aria-label="b3log-siyuan1"><Whale w={28} /></BarButton></BarGroup>
          <RightTray />
        </DsmBar>
        <Shortcuts>{shortcuts.map(([name, art]) => <Shortcut key={name}>{art}{name}</Shortcut>)}</Shortcuts>

        <Widgets>
          <WidgetHead>
            <TitleButton aria-label="最小化"><svg width="15" height="3"><rect width="15" height="3" rx="1" fill="#75828b" /></svg></TitleButton>
            <TitleButton aria-label="固定"><Pin size={17} /></TitleButton>
            <TitleButton aria-label="停靠"><svg width="18" height="17" fill="#2f6ea8"><path d="M0 2H12V7H0ZM5 9H12V14H5ZM15 0H18V17H15Z" /></svg></TitleButton>
          </WidgetHead>
          <WidgetBody>
            <Cards>
              <Card $r={19}>
                <h2>资源监控</h2>
                <Loads>
                  {[4, 52].map((n) => <LoadRow key={n}><Meter $w="200px"><MeterFill style={{ width: `${n}%` }} /></Meter>{n}%</LoadRow>)}
                </Loads>
                <Speeds>
                  <Speed $color={blue}><svg width="13" height="12" fill={blue}><path d="M6.500 0 13 6H11V12H2V6H0Z" /></svg>5.2 KB/s</Speed>
                  <Speed $color="#14b0ac"><svg width="13" height="12" fill="#14b0ac"><path d="M6.500 12 13 6H11V0H2V6H0Z" /></svg>5.7 KB/s</Speed>
                </Speeds>
                <ChartRow><Scale>{[100, 80, 60, 40, 20, 0].map((n) => <span key={n}>{n}</span>)}</Scale><Chart /></ChartRow>
              </Card>
              <Card $r={10}>
                <h2>存储</h2>
                <StorageList>
                  <Volumes>
                    {volumes.map(({ n, used, total, pct, fill }) => (
                      <Volume key={n}>
                        <VolumeIcon />
                        <VolumeText>
                          <h3>存储空间 {n} (<em>良好</em>)</h3>
                          <Meter><MeterFill style={{ width: `${fill}%` }} /></Meter>
                          <p><b>{used} </b><span>/ {total}</span>{pct}%</p>
                        </VolumeText>
                      </Volume>
                    ))}
                  </Volumes>
                  <Arrows><ChevronUp size={18} /><ChevronDown size={18} /></Arrows>
                </StorageList>
              </Card>
            </Cards>
            <Scrollbar />
          </WidgetBody>
        </Widgets>

        <Window $x={311} $y={111} $w={1235} $h="707px" aria-label="Docker">
          <TitleBar><Whale w={28} fade /></TitleBar>
          <BackBody>
            <SideNav>
              {['总览', '容器', '注册表', '映像', '网络', '日志'].map((n, i) => (
                <SideItem key={n} $on={i === 1} aria-label={n}><svg width="22" height="22" fill="#5a6573">{sideIcons[i]}</svg></SideItem>
              ))}
            </SideNav>
          </BackBody>
        </Window>

        <Window $x={375} $y={86} $w={1163} $front>
          <TitleBar>
            <Whale w={28} />
            <h1>b3log-siyuan1</h1>
            <TitleButton aria-label="最小化"><svg width="16" height="3"><rect width="16" height="3" rx="1" fill="#979da5" /></svg></TitleButton>
            <TitleButton aria-label="最大化"><svg width="16" height="14" fill="none" stroke="#979da5" strokeWidth="2"><rect x="1" y="1" width="14" height="12" rx="1" /><path d="M1 3H15" strokeWidth="4" /></svg></TitleButton>
            <TitleButton aria-label="关闭"><svg width="14" height="14" stroke="#979da5" strokeWidth="3"><path d="M1 1 13 13M13 1 1 13" /></svg></TitleButton>
          </TitleBar>
          <Body>
            <Tabs $h={58} $top={9} role="tablist">
              {['总览', '进程', '日志', '终端机'].map((t, i) => <Tab key={t} role="tab" $on={i === 0} $bg="#fff">{t}</Tab>)}
            </Tabs>
            <Actions><Action disabled>启动</Action><Action>停止</Action><Action>重新启动</Action><Action>强制停止</Action></Actions>
            <Panel $h={292}>
              <PanelTitle>b3log-siyuan1</PanelTitle>
              <PanelBody>
                <Facts $w="540px" $cols="270px 208px">
                  <dt>启用时间:</dt><dd>1 分钟前</dd>
                  <dt>桌面快捷方式:</dt><dd>已停用</dd>
                  <dt>CPU 优先顺序:</dt><dd>中</dd>
                  <dt>内存限制:</dt><dd>自动</dd>
                  <dt>执行命令:</dt><dd>/opt/siyuan/kernel -resident -workspace /siyuan</dd>
                </Facts>
                <Usages>
                  <Usage><Cpu /><UsageText $color={blue}><h3>CPU 使用率</h3><p><b>1.58</b><b>%</b></p><Meter $h={8}><MeterFill style={{ width: '1.8%' }} /></Meter></UsageText></Usage>
                  <Usage><Ram /><UsageText $color={green}><h3>内存使用率</h3><p><b>44</b>MB</p><Meter $h={8}><MeterFill $color={green} style={{ width: '1.8%' }} /></Meter></UsageText></Usage>
                </Usages>
              </PanelBody>
            </Panel>
            <Lower>
              <Panel $h={230}>
                <Inset>
                  <Tabs $h={48} role="tablist">
                    {['端口设置', '存储空间', '链接', '网络'].map((t, i) => <Tab key={t} role="tab" $on={i === 0} $bg="#f5f7f9">{t}</Tab>)}
                  </Tabs>
                  <Ports>
                    <colgroup><col width="173" /><col width="172" /><col width="156" /><col /></colgroup>
                    <thead><tr><th>本地端口</th><th>容器端口</th><th>类型</th><th /></tr></thead>
                    <tbody><tr><td>6806</td><td>6806</td><td>tcp</td><td /></tr></tbody>
                  </Ports>
                </Inset>
              </Panel>
              <Panel $h={230}>
                <PanelTitle $r={10} $size={15}>环境变量</PanelTitle>
                <PanelBody $r={30}>
                  <Facts $w="auto" $cols="261px 217px"><dt>PATH:</dt><dd>/usr/local/sbin:/usr/local/bin:/usr/sbin</dd><dt>TZ:</dt><dd>Asia/Shanghai</dd></Facts>
                </PanelBody>
              </Panel>
            </Lower>
          </Body>
          <Tooltip role="tooltip">/opt/siyuan/kernel -resident -workspace /siyuan -servePath<br />192.168.3.6:6806 -accessAuthCode zc320923</Tooltip>
        </Window>
      </Desktop>

      <Taskbar>
        <Weather>
          <svg width="30" height="28" viewBox="0 0 30 28"><circle cx="22" cy="8" r="8" fill="#ff9d0c" /><path d="M6 25Q0 25 0 19 1 14 6 14 8 6 14 6 21 7 22 14 28 15 28 20 28 25 23 25Z" fill="#dfe8f6" /></svg>
          <div>29°C<small>多云</small></div>
        </Weather>
        <Dock>{dock.map(([name, icon, active]) => <DockButton key={name} $active={active} aria-label={name}>{icon}</DockButton>)}</Dock>
        <SysTray>
          <TrayItem $w={30} aria-label="隐藏的图标"><ChevronUp size={22} strokeWidth={1.5} /></TrayItem>
          <TrayItem $w={30} aria-label="色块"><svg width="20" height="20"><path d="M0 0H10V10H0Z" fill="#e5484d" /><path d="M10 0H20V10H10Z" fill="#ffd23c" /><path d="M0 10H10V20H0Z" fill="#4b5d66" /><path d="M10 10H20V20H10Z" fill="#3ccbb0" /></svg></TrayItem>
          <TrayItem $w={40}>中</TrayItem>
          <TrayItem $w={58}>拼</TrayItem>
          <TrayItem $w={33} aria-label="网络"><svg width="22" height="20" fill="none" stroke="#fff" strokeWidth="1.5"><path d="M13 3H2V15H17V10M5 19H15" /><path d="M15 1H20V6H15ZM17.500 6V11" /></svg></TrayItem>
          <TrayItem $w={28} aria-label="音量"><svg width="20" height="18" fill="none" stroke="#fff" strokeWidth="1.400"><path d="M1 6H4L9 2V16L4 12H1ZM12 6Q14 9 12 12M15 4Q18 9 15 14" /></svg></TrayItem>
          <TrayItem $w={34} aria-label="电池"><svg width="22" height="18" fill="#fff"><path d="M8 5H18Q19 5 19 6V8H21V13H19V16H6V9Q8 9 8 5Z" /><path d="M1 3H7V7Q4 10 1 7ZM2 0H3V3H2ZM5 0H6V3H5Z" /></svg></TrayItem>
          <Clock>12:14<br />2022/6/15</Clock>
        </SysTray>
      </Taskbar>
    </Screen>
  );
}
